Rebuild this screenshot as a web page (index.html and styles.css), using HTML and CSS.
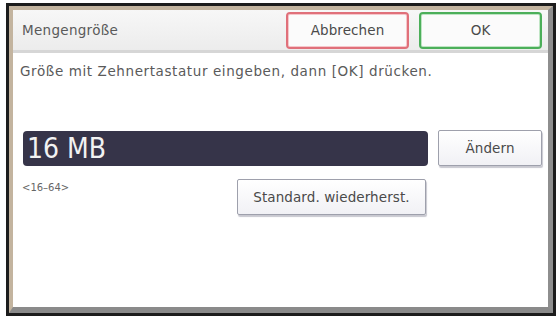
FILE: index.html
```html
<!DOCTYPE html>
<html>
<head>
<meta charset="utf-8">
<link rel="stylesheet" href="styles.css">
</head>
<body>
<div class="frame">
  <div class="panel">
    <div class="titlebar">
      <span class="title">Mengengröße</span>
      <div class="actions">
        <button class="btn cancel">Abbrechen</button>
        <button class="btn ok">OK</button>
      </div>
    </div>
    <div class="body">
      <p class="hint">Größe mit Zehnertastatur eingeben, dann [OK] drücken.</p>
      <div class="valuerow">
        <div class="value">16 MB</div>
        <button class="btn plain change">Ändern</button>
      </div>
      <div class="rangerow">
        <span class="range">&lt;16–64&gt;</span>
        <button class="btn plain reset">Standard. wiederherst.</button>
      </div>
    </div>
  </div>
</div>
</body>
</html>
```
FILE: styles.css
```css
html, body {
  margin: 0;
  padding: 0;
  background: #ffffff;
}
body {
  font-family: "DejaVu Sans", sans-serif;
  color: #3a3a3a;
}
.frame {
  margin: 3px 3px 0 6px;
  width: 544px;
  height: 307px;
  border: 3px solid #1c1c1c;
}
.panel {
  box-sizing: border-box;
  height: 100%;
  border-left: 4px solid #c3b49f;
  border-top: 4px solid #c3b49f;
  border-right: 5px solid #8e8e8e;
  border-bottom: 6px solid #8a8a8a;
  background: #fff;
  display: flex;
  flex-direction: column;
}
.titlebar {
  height: 40px;
  display: flex;
  align-items: center;
  justify-content: space-between;
  background: linear-gradient(#f7f7f7, #ececec);
  border-bottom: 3px solid #d6d6d6;
  padding: 0 6px 0 9px;
}
.title {
  font-size: 13.5px;
  color: #5a5a5a;
  letter-spacing: 0.3px;
}
.actions {
  display: flex;
  gap: 10px;
}
.btn {
  font-family: inherit;
  font-size: 13.5px;
  color: #4a4a4a;
  letter-spacing: 0.1px;
  background: #fbfbfb;
  cursor: default;
}
.cancel, .ok {
  width: 123px;
  height: 37px;
  border-radius: 4px;
}
.cancel {
  border: 2px solid #e0707a;
  box-shadow: inset 0 0 0 1px #f6c7cb;
}
.ok {
  border: 2px solid #4caf5a;
  box-shadow: inset 0 0 0 1px #bfe5c4;
}
.body {
  padding: 0 0 0 7px;
  display: flex;
  flex-direction: column;
}
.hint {
  margin: 10px 0 0 0;
  font-size: 13.5px;
  color: #5a5a5a;
  letter-spacing: 0.6px;
}
.valuerow {
  margin: 51px 0 0 3px;
  display: flex;
  align-items: center;
  gap: 10px;
}
.value {
  width: 405px;
  height: 35px;
  box-sizing: border-box;
  background: #363449;
  border-radius: 4px;
  color: #f2f2f2;
  font-family: "DejaVu Sans Condensed", "DejaVu Sans", sans-serif;
  font-size: 28px;
  line-height: 35px;
  padding-left: 4px;
}
.plain {
  border: 1px solid #9ea0ac;
  border-radius: 2px;
  box-shadow: 1px 2px 1px #c8c8d0;
  background: linear-gradient(#ffffff, #f1f1f5);
}
.change {
  width: 104px;
  height: 36px;
}
.rangerow {
  display: flex;
  align-items: flex-start;
  margin: 13px 0 0 2px;
}
.range {
  font-size: 10px;
  color: #666;
  margin-top: 3px;
  width: 215px;
}
.reset {
  width: 189px;
  height: 36px;
}
```
